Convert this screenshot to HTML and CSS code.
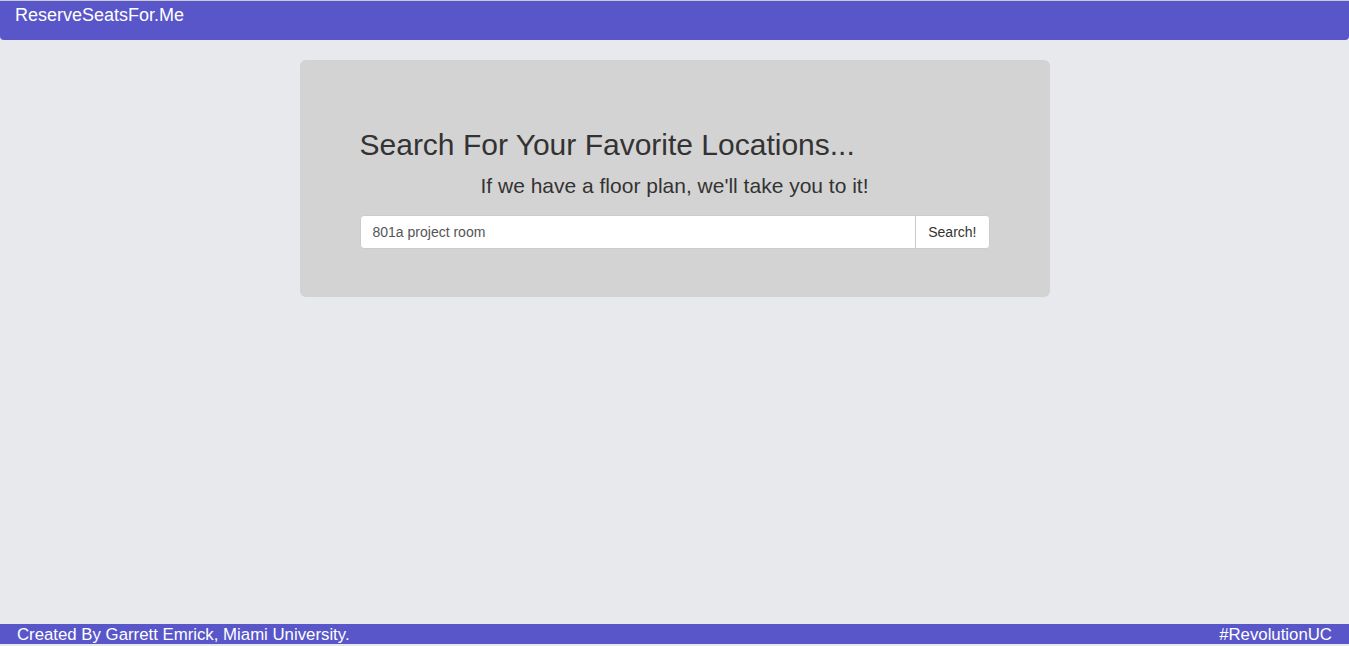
FILE: index.html
```html
<!DOCTYPE html>
<html lang="en">
<head>
  <meta charset="UTF-8" />
  <title>ReserveSeatsFor.Me</title>
  <link rel="stylesheet" href="styles.css">
</head>
<body>
  <nav class="navbar">
    <a class="brand" href="#">ReserveSeatsFor.Me</a>
  </nav>

  <div class="container">
    <div class="jumbotron">
      <h1>Search For Your Favorite Locations...</h1>
      <p class="lead">If we have a floor plan, we'll take you to it!</p>
      <form class="input-group">
        <input type="text" class="search" value="801a project room">
        <button type="button" class="btn">Search!</button>
      </form>
    </div>
  </div>

  <footer class="footer">
    <span>Created By Garrett Emrick, Miami University.</span>
    <span>#RevolutionUC</span>
  </footer>
</body>
</html>
```

FILE: styles.css
```css
html, body {
  height: 100%;
}
body {
  margin: 0;
  font-family: "Liberation Sans", Arial, sans-serif;
  font-size: 14px;
  color: #333;
  background-color: #e8e9ed;
  display: flex;
  flex-direction: column;
  border-top: 1px solid #c9c9d3;
  box-sizing: border-box;
}
.navbar {
  background-color: #5856c8;
  height: 39px;
  border-radius: 0 0 4px 4px;
  padding: 0 15px;
}
.brand {
  display: block;
  color: #fff;
  text-decoration: none;
  font-size: 18px;
  line-height: 28px;
}
.container {
  width: 750px;
  margin: 20px auto 0;
  flex: 1;
}
.jumbotron {
  background-color: #d3d3d3;
  border-radius: 6px;
  padding: 60px 60px 48px;
  height: 237px;
  box-sizing: border-box;
}
h1 {
  font-size: 30px;
  font-weight: normal;
  margin: 7px 0 0;
  line-height: 36px;
}
.lead {
  text-align: center;
  font-size: 21px;
  margin: 10px 0 0;
  line-height: 26px;
}
.input-group {
  display: flex;
  margin-top: 16px;
  border: 1px solid #ccc;
  border-radius: 4px;
  background: #fff;
  height: 34px;
  box-sizing: border-box;
}
.search {
  flex: 1;
  border: 0;
  border-radius: 4px 0 0 4px;
  padding: 0 12px;
  font: inherit;
  font-size: 14px;
  color: #555;
  background: transparent;
  outline: none;
}
.btn {
  border: 0;
  border-left: 1px solid #ccc;
  background: #fff;
  border-radius: 0 4px 4px 0;
  padding: 0 12px;
  font: inherit;
  font-size: 14px;
  color: #333;
}
.footer {
  background-color: #5856c8;
  color: #fff;
  font-size: 16.8px;
  height: 20px;
  line-height: 22px;
  margin-bottom: 2px;
  padding: 0 17px;
  display: flex;
  justify-content: space-between;
}
```
